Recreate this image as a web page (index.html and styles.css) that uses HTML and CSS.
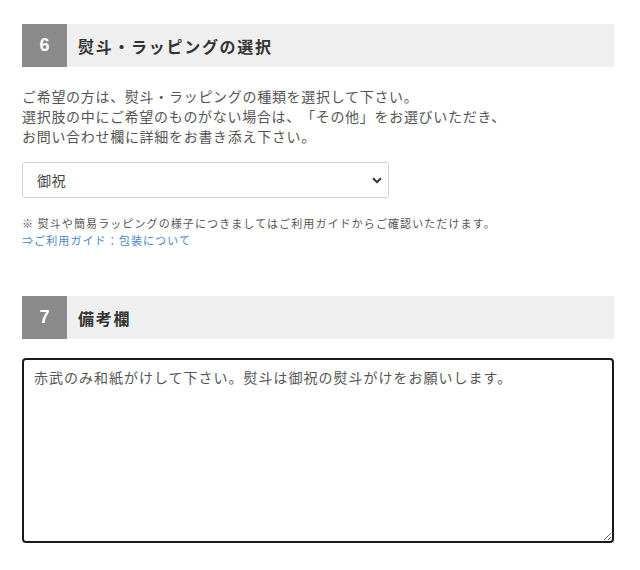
FILE: index.html
```html
<!DOCTYPE html>
<html lang="ja">
<head>
  <meta charset="UTF-8" />
  <title>ご注文フォーム</title>
  <link rel="stylesheet" href="styles.css">
</head>
<body>
  <div class="form-wrap">

    <div class="section-head">
      <span class="num">6</span>
      <h2>熨斗・ラッピングの選択</h2>
    </div>
    <p class="lead">
      ご希望の方は、熨斗・ラッピングの種類を選択して下さい。<br>
      選択肢の中にご希望のものがない場合は、「その他」をお選びいただき、<br>
      お問い合わせ欄に詳細をお書き添え下さい。
    </p>

    <div class="select-box">
      <select id="noshi">
        <option>御祝</option>
        <option>内祝</option>
        <option>御礼</option>
        <option>その他</option>
      </select>
      <svg class="chevron" width="10" height="7" viewBox="0 0 10 7">
        <path d="M1 1.2 L5 5.2 L9 1.2" fill="none" stroke="#333" stroke-width="2"/>
      </svg>
    </div>

    <p class="note">
      ※ 熨斗や簡易ラッピングの様子につきましてはご利用ガイドからご確認いただけます。<br>
      <a href="#">⇒ご利用ガイド：包装について</a>
    </p>

    <div class="section-head second">
      <span class="num">7</span>
      <h2>備考欄</h2>
    </div>

    <textarea class="memo">赤武のみ和紙がけして下さい。熨斗は御祝の熨斗がけをお願いします。</textarea>

  </div>
</body>
</html>
```

FILE: styles.css
```css
body {
  margin: 0;
  padding: 0;
  background: #fff;
  font-family: "Noto Sans CJK JP", "Noto Sans", sans-serif;
  color: #444;
  text-spacing-trim: space-all;
}

.form-wrap {
  width: 592px;
  padding: 24px 0 0 22px;
}

.section-head {
  display: flex;
  align-items: center;
  height: 43px;
  background: #efefef;
}

.section-head.second {
  margin-top: 47px;
}

.num {
  width: 45px;
  height: 43px;
  display: flex;
  align-items: center;
  justify-content: center;
  background: #8a8a8a;
  color: #fff;
  font-family: "Liberation Sans", sans-serif;
  font-weight: bold;
  font-size: 18px;
}

.section-head h2 {
  margin: 0 0 0 11px;
  font-size: 16px;
  letter-spacing: 1.7px;
  font-weight: bold;
  color: #333;
}

.lead {
  margin: 19px 0 0;
  font-size: 14px;
  line-height: 20px;
  letter-spacing: 0.7px;
  color: #555;
}

.select-box {
  position: relative;
  width: 367px;
  margin-top: 16px;
}

.select-box select {
  appearance: none;
  -webkit-appearance: none;
  width: 100%;
  height: 36px;
  padding: 0 14px;
  border: 1px solid #d3d3d3;
  border-radius: 3px;
  background: #fff;
  font-family: inherit;
  font-size: 14px;
  letter-spacing: 0.5px;
  color: #444;
}

.chevron {
  position: absolute;
  right: 7px;
  top: 15px;
}

.note {
  margin: 17px 0 0;
  font-size: 11px;
  line-height: 17px;
  letter-spacing: 1.1px;
  color: #555;
}

.note a {
  color: #4a86c4;
  text-decoration: none;
}

.memo {
  display: block;
  box-sizing: border-box;
  width: 592px;
  height: 185px;
  margin-top: 19px;
  padding: 7px 10px;
  border: 2px solid #1a1a1a;
  border-radius: 4px;
  outline: none;
  font-family: inherit;
  font-size: 14px;
  line-height: 20px;
  letter-spacing: 1px;
  color: #555;
}
```
